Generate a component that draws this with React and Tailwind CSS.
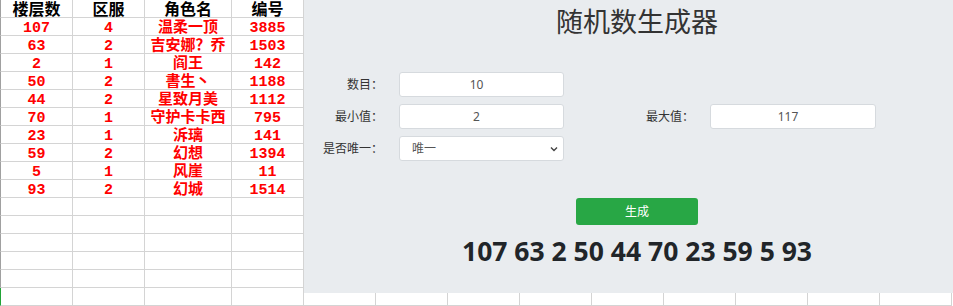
const rows = [
  ["107", "4", "温柔一顶", "3885"],
  ["63", "2", "吉安娜？乔", "1503"],
  ["2", "1", "阎王", "142"],
  ["50", "2", "書生丶", "1188"],
  ["44", "2", "星致月美", "1112"],
  ["70", "1", "守护卡卡西", "795"],
  ["23", "1", "泝璃", "141"],
  ["59", "2", "幻想", "1394"],
  ["5", "1", "风崖", "11"],
  ["93", "2", "幻城", "1514"],
];

const header = ["楼层数", "区服", "角色名", "编号"];
const widths = ["w-[73px]", "w-[72px]", "w-[87px]", "w-[72px]"];
const extraCols = Array.from({ length: 9 });
const totalRows = 17;

const cellFont = {
  fontFamily: '"Liberation Mono", "Noto Sans CJK SC", monospace',
};

const Sheet = () => (
  <div className="flex flex-col" style={cellFont}>
    {Array.from({ length: totalRows }).map((_, r) => {
      const data = r === 0 ? header : rows[r - 1];
      return (
        <div key={r} className="flex">
          {widths.map((w, c) => (
            <div
              key={c}
              className={`${w} h-[18px] shrink-0 border-r border-b border-[#d4d4d4] text-center font-bold whitespace-nowrap ${
                c === 0
                  ? r === totalRows - 1
                    ? "border-l border-l-[#21a336]"
                    : "border-l border-l-[#a0a0a0]"
                  : ""
              } ${
                r === 0
                  ? "text-[16px] leading-[23px] text-black"
                  : "text-[15px] leading-[22px] text-[#ff0000]"
              }`}
            >
              {data ? data[c] : ""}
            </div>
          ))}
          {extraCols.map((_, c) => (
            <div
              key={"x" + c}
              className="w-[72px] h-[18px] shrink-0 border-r border-b border-[#d4d4d4]"
            />
          ))}
        </div>
      );
    })}
  </div>
);

const Label = ({ children, className = "" }) => (
  <div
    className={`w-[79px] shrink-0 text-right text-[12px] text-[#333] ${className}`}
  >
    {children}
  </div>
);

const Field = ({ value, className = "" }) => (
  <div
    className={`ml-4 h-[25px] shrink-0 rounded-[3px] border border-[#d6dade] bg-white pr-[10px] text-center text-[12px] leading-[23px] text-[#555] ${className}`}
  >
    {value}
  </div>
);

export default function App() {
  return (
    <div className="relative w-[953px] h-[306px] overflow-hidden bg-white">
      <Sheet />

      {/* generator panel over the sheet */}
      <div
        className="absolute left-[304px] top-0 w-[649px] h-[293px] overflow-hidden bg-[#e9ecef]"
        style={{ fontFamily: '"Noto Sans", "Noto Sans CJK SC", sans-serif' }}
      >
        <div className="w-[666px] flex flex-col">
          <h1 className="mt-[6px] text-center text-[27px] leading-[32px] text-[#333]">
            随机数生成器
          </h1>

          <div className="mt-[34px] flex flex-col gap-[7px]">
            <div className="flex items-center">
              <Label>数目：</Label>
              <Field value="10" className="w-[165px]" />
            </div>

            <div className="flex items-center">
              <Label>最小值：</Label>
              <Field value="2" className="w-[165px]" />
              <Label className="ml-[51px]">最大值：</Label>
              <Field value="117" className="w-[166px]" />
            </div>

            <div className="flex items-center">
              <Label>是否唯一：</Label>
              <div className="relative ml-4 w-[165px] h-[25px] rounded-[3px] border border-[#d6dade] bg-white">
                <div className="pl-[12px] text-[12px] leading-[23px] text-[#555]">
                  唯一
                </div>
                <svg
                  className="absolute right-[5px] top-[9px]"
                  width="8"
                  height="6"
                  viewBox="0 0 8 6"
                >
                  <path
                    d="M1 1.5 L4 4.5 L7 1.5"
                    fill="none"
                    stroke="#444"
                    strokeWidth="1.4"
                  />
                </svg>
              </div>
            </div>
          </div>

          <button className="mt-[37px] self-center w-[122px] h-[27px] rounded-[3px] bg-[#28a745] text-[12px] text-white">
            生成
          </button>

          <div className="mt-[8px] text-center text-[26.5px] leading-[36px] font-bold text-[#212529]">
            107 63 2 50 44 70 23 59 5 93
          </div>
        </div>
      </div>
    </div>
  );
}
